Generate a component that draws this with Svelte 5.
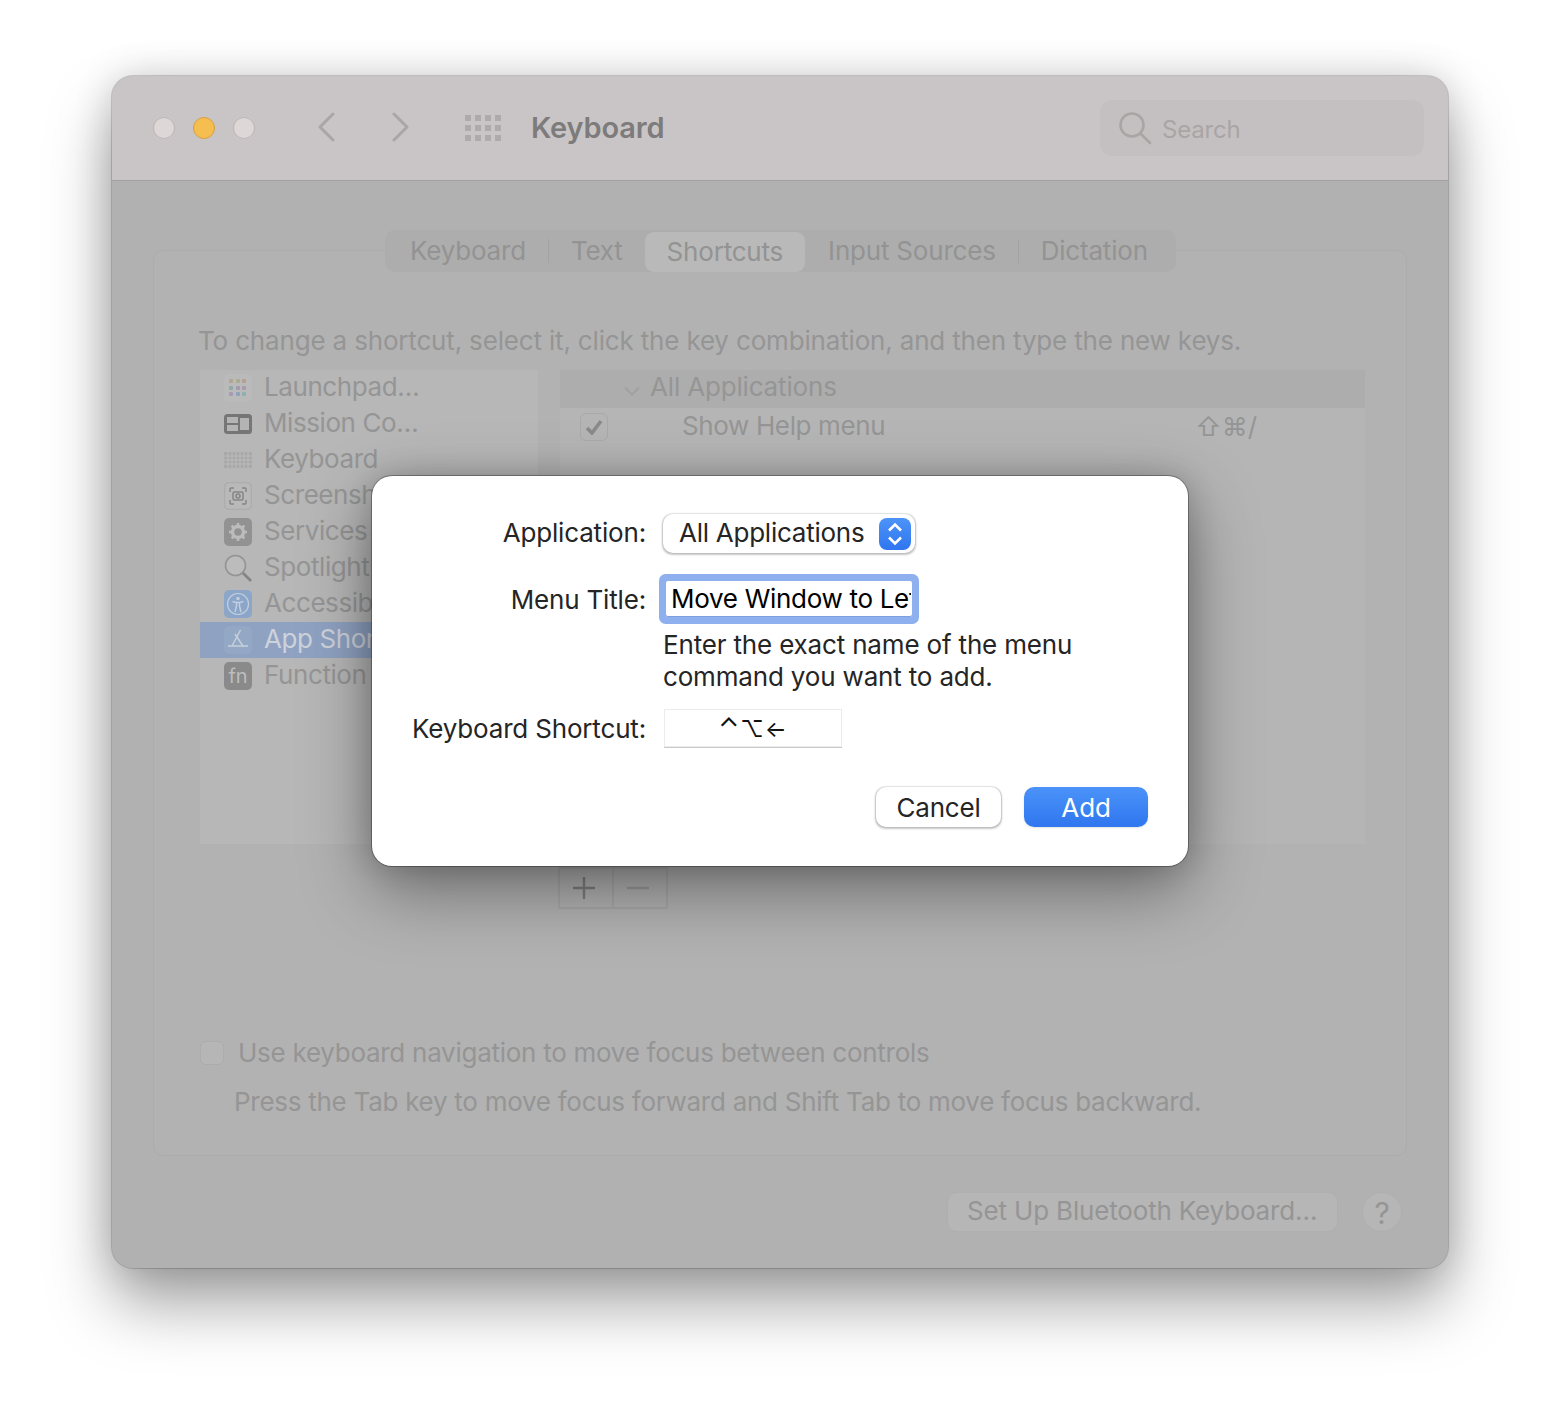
<script>
	const tabs = ['Keyboard', 'Text', 'Shortcuts', 'Input Sources', 'Dictation'];
	const activeTab = 'Shortcuts';

	const categories = [
		{ id: 'launchpad', label: 'Launchpad…' },
		{ id: 'mission', label: 'Mission Co…' },
		{ id: 'keyboard', label: 'Keyboard' },
		{ id: 'screenshot', label: 'Screenshots' },
		{ id: 'services', label: 'Services' },
		{ id: 'spotlight', label: 'Spotlight' },
		{ id: 'access', label: 'Accessibility' },
		{ id: 'app', label: 'App Shortcuts', selected: true },
		{ id: 'fn', label: 'Function Keys' }
	];

	const launchDots = ['#b3a68f', '#a9ad90', '#b3a08f', '#8fa8a8', '#a39ab0', '#a89ab0', '#a69ab5', '#8fa3b8', '#8fb0b0'];
	const gridDots = Array.from({ length: 12 });
</script>

<div class="window">
	<header class="titlebar">
		<div class="lights">
			<span class="light"></span>
			<span class="light yellow"></span>
			<span class="light"></span>
		</div>
		<div class="nav">
			<svg width="18" height="30" viewBox="0 0 18 30"><path d="M16 2 3 15l13 13" /></svg>
			<svg width="18" height="30" viewBox="0 0 18 30"><path d="M2 2l13 13L2 28" /></svg>
		</div>
		<div class="apps">
			{#each gridDots as _}
				<span></span>
			{/each}
		</div>
		<h1>Keyboard</h1>
		<div class="search">
			<svg width="34" height="34" viewBox="0 0 34 34">
				<circle cx="14" cy="14" r="11.5" />
				<path d="M22.5 22.5 32 32" />
			</svg>
			<span>Search</span>
		</div>
	</header>

	<main class="content">
		<nav class="tabs">
			{#each tabs as tab, i}
				{#if i === 1 || i === 4}<span class="sep"></span>{/if}
				<span class="tab" class:active={tab === activeTab}>{tab}</span>
			{/each}
		</nav>

		<section class="box">
			<p class="intro">To change a shortcut, select it, click the key combination, and then type the new keys.</p>

			<div class="lists">
				<ul class="categories">
					{#each categories as cat}
						<li class:selected={cat.selected}>
							<span class="icon">
								{#if cat.id === 'launchpad'}
									<span class="launch">
										{#each launchDots as color}
											<i style="background: {color}"></i>
										{/each}
									</span>
								{:else if cat.id === 'mission'}
									<svg width="28" height="20" viewBox="0 0 28 20">
										<rect width="28" height="20" rx="3.5" fill="#767676" />
										<rect x="3" y="3" width="11" height="6" fill="#b4b4b4" />
										<rect x="3" y="11" width="11" height="6" fill="#b4b4b4" />
										<rect x="16" y="4" width="9" height="12" fill="#b4b4b4" />
									</svg>
								{:else if cat.id === 'keyboard'}
									<svg width="28" height="16" viewBox="0 0 28 16">
										<rect width="28" height="16" fill="#a8a8a8" />
										<path d="M0 4h28M0 8h28M0 12h28M4 0v16M8 0v16M12 0v16M16 0v16M20 0v16M24 0v16" stroke="#bbb" stroke-width="1" />
									</svg>
								{:else if cat.id === 'screenshot'}
									<svg width="28" height="28" viewBox="0 0 28 28" fill="none" stroke="#858585" stroke-width="1.5">
										<rect x=".5" y=".5" width="27" height="27" rx="5" fill="#b9b9b9" stroke="#adadad" />
										<path d="M6 10V7q0-1 1-1h3M18 6h3q1 0 1 1v3M22 18v3q0 1-1 1h-3M10 22H7q-1 0-1-1v-3" />
										<rect x="9" y="10" width="10" height="8" rx="1.5" />
										<circle cx="14" cy="14" r="2" />
									</svg>
								{:else if cat.id === 'services'}
									<svg width="28" height="28" viewBox="0 0 28 28">
										<rect width="28" height="28" rx="5" fill="#929292" />
										<circle cx="14" cy="14" r="5.5" fill="none" stroke="#bcbcbc" stroke-width="3.4" />
										<path d="M14 5v18M5 14h18M7.6 7.6l12.8 12.8M20.4 7.6 7.6 20.4" stroke="#bcbcbc" stroke-width="2.6" stroke-dasharray="3 12" />
									</svg>
								{:else if cat.id === 'spotlight'}
									<svg width="28" height="28" viewBox="0 0 28 28" fill="none">
										<circle cx="11.5" cy="11.5" r="10" fill="#bcbcbc" stroke="#949494" stroke-width="1.6" />
										<path d="M19 19l8 8" stroke="#858585" stroke-width="2.6" />
									</svg>
								{:else if cat.id === 'access'}
									<svg width="28" height="28" viewBox="0 0 28 28" fill="none">
										<rect width="28" height="28" rx="5" fill="#8ba6c9" />
										<circle cx="14" cy="14" r="10.5" stroke="#c3cfde" stroke-width="1.2" />
										<circle cx="14" cy="8.5" r="1.7" fill="#c3cfde" />
										<path d="M8.5 11.5 12.5 12.5V16l-1.5 6M19.5 11.5l-4 1V16l1.5 6M12.5 12.5h3" stroke="#c3cfde" stroke-width="1.5" />
									</svg>
								{:else if cat.id === 'app'}
									<svg width="28" height="28" viewBox="0 0 28 28" fill="none">
										<rect width="28" height="28" rx="5" fill="#93a8c4" />
										<path d="M16.5 4 8 20M11 8l8.5 13M4 20h20" stroke="#c6cfdc" stroke-width="1.5" />
									</svg>
								{:else if cat.id === 'fn'}
									<span class="fn">fn</span>
								{/if}
							</span>
							<span class="name">{cat.label}</span>
						</li>
					{/each}
				</ul>

				<div class="commands">
					<div class="group">
						<svg width="16" height="10" viewBox="0 0 16 10"><path d="M1 1.5 8 8.5l7-7" /></svg>
						<span>All Applications</span>
					</div>
					<div class="command">
						<span class="check">
							<svg width="18" height="16" viewBox="0 0 18 16"><path d="M2 9l5 5L16 2" /></svg>
						</span>
						<span class="cmd-name">Show Help menu</span>
						<span class="keys">⇧⌘/</span>
					</div>
				</div>
			</div>

			<div class="plusminus">
				<span class="pm">
					<svg width="22" height="22" viewBox="0 0 22 22"><path d="M0 11h22M11 0v22" /></svg>
				</span>
				<span class="pm">
					<svg width="22" height="22" viewBox="0 0 22 22"><path class="faint" d="M0 11h22" /></svg>
				</span>
			</div>

			<label class="navcheck">
				<span class="box-check"></span>
				<span>Use keyboard navigation to move focus between controls</span>
			</label>
			<p class="navhint">Press the Tab key to move focus forward and Shift Tab to move focus backward.</p>
		</section>

		<footer class="bottom">
			<span class="bt-btn">Set Up Bluetooth Keyboard…</span>
			<span class="help">?</span>
		</footer>
	</main>

	<div class="sheet">
		<div class="form">
			<span class="lbl first">Application:</span>
			<div class="select">
				<span>All Applications</span>
				<span class="stepper">
					<svg width="16" height="24" viewBox="0 0 16 24"><path d="M2 8.5 8 2.5l6 6M2 15.5l6 6 6-6" /></svg>
				</span>
			</div>

			<span class="lbl second">Menu Title:</span>
			<input class="title-input" value="Move Window to Left" readonly />

			<span></span>
			<p class="hint">Enter the exact name of the menu<br />command you want to add.</p>

			<span class="lbl">Keyboard Shortcut:</span>
			<div class="shortcut"><span class="ctrl">⌃</span>⌥←</div>
		</div>
		<div class="actions">
			<button class="cancel">Cancel</button>
			<button class="add">Add</button>
		</div>
	</div>
</div>

<style>
	:global(body) {
		background: #fff;
		font-family: Inter, 'Liberation Sans', sans-serif;
	}

	.window {
		position: relative;
		width: 1336px;
		height: 1192px;
		margin: 76px 112px 148px;
		display: flex;
		flex-direction: column;
		background: #b1b1b1;
		border-radius: 21px;
		box-shadow: 0 0 0 1px rgba(0, 0, 0, 0.16), 0 36px 64px rgba(0, 0, 0, 0.36), 0 0 38px rgba(0, 0, 0, 0.16);
		font-size: 26px;
		letter-spacing: -0.17px;
		color: #959595;
	}

	/* title bar */
	.titlebar {
		height: 105px;
		flex: none;
		box-sizing: border-box;
		display: flex;
		align-items: center;
		background: #c9c5c6;
		border-bottom: 1px solid #a3a1a1;
		border-radius: 21px 21px 0 0;
		padding: 0 24px 0 41px;
	}

	.lights {
		display: flex;
		gap: 18px;
	}

	.light {
		width: 22px;
		height: 22px;
		box-sizing: border-box;
		border-radius: 50%;
		background: #ddd7d8;
		border: 1px solid #bdb7b8;
	}

	.light.yellow {
		background: #f6bd4f;
		border-color: #d8a03c;
	}

	.nav {
		display: flex;
		gap: 57px;
		margin: -2px 0 0 62px;
	}

	.nav path {
		fill: none;
		stroke: #a9a6a6;
		stroke-width: 3;
		stroke-linecap: round;
		stroke-linejoin: round;
	}

	.apps {
		display: grid;
		grid-template-columns: repeat(4, 6px);
		grid-template-rows: repeat(3, 6px);
		gap: 3.6px 4px;
		margin-left: 55px;
	}

	.apps span {
		background: #aeaaab;
	}

	h1 {
		margin: -2px 0 0 30px;
		font-size: 29px;
		font-weight: 600;
		color: #7d7b7b;
		flex: 1;
	}

	.search {
		width: 324px;
		height: 56px;
		box-sizing: border-box;
		display: flex;
		align-items: center;
		gap: 10px;
		padding-left: 18px;
		background: #c4c0c1;
		border-radius: 12px;
		color: #a8a5a5;
		font-size: 24px;
	}

	.search span {
		margin-top: 2px;
	}

	.search svg {
		fill: none;
		stroke: #a8a5a5;
		stroke-width: 2.6;
		stroke-linecap: round;
	}

	/* content */
	.content {
		flex: 1;
		display: flex;
		flex-direction: column;
		padding: 49px 41px 0;
	}

	.tabs {
		align-self: flex-start;
		position: relative;
		z-index: 1;
		display: flex;
		align-items: center;
		height: 42px;
		padding: 0 6px 0 3px;
		margin: 0 0 -22px 232px;
		background: #adadad;
		border-radius: 10px;
		letter-spacing: -0.2px;
	}

	.tab {
		padding: 0 22px;
		line-height: 40px;
		border-radius: 9px;
		color: #939393;
	}

	.tab.active {
		background: #b9b9b9;
		margin: 2px 1px 0 0;
	}

	.sep {
		width: 1px;
		height: 24px;
		background: #a3a3a3;
	}

	.box {
		height: 906px;
		box-sizing: border-box;
		padding: 74px 41px 0 46px;
		border: 1px solid #acacac;
		border-radius: 10px;
		background: #b2b2b2;
	}

	.intro {
		margin: 0 0 13px -2px;
		line-height: 32px;
		white-space: nowrap;
	}

	.lists {
		display: flex;
		gap: 22px;
		height: 474px;
	}

	.categories {
		width: 338px;
		margin: 0;
		padding: 0;
		list-style: none;
		background: #b7b7b7;
		overflow: hidden;
	}

	.categories li {
		height: 36px;
		display: flex;
		align-items: center;
		white-space: nowrap;
	}

	.categories li.selected {
		background: #8fa2c2;
		color: #cdd2db;
	}

	.name {
		margin-top: -4px;
		letter-spacing: -0.42px;
	}

	.icon {
		width: 28px;
		height: 28px;
		margin: 0 12px 0 24px;
		display: flex;
		align-items: center;
		justify-content: center;
		flex: none;
	}

	.launch {
		width: 28px;
		height: 28px;
		box-sizing: border-box;
		padding: 5px;
		display: grid;
		grid-template-columns: repeat(3, 4px);
		grid-auto-rows: 4px;
		gap: 2.5px;
		background: #bababa;
		border-radius: 5px;
	}

	.launch i {
		border-radius: 1px;
	}

	.fn {
		width: 28px;
		height: 28px;
		display: flex;
		align-items: center;
		justify-content: center;
		background: #8a8a8a;
		border-radius: 5px;
		color: #bdbdbd;
		font-size: 20px;
		font-weight: 400;
	}

	.commands {
		flex: 1;
		background: #b5b5b5;
	}

	.group {
		height: 38px;
		display: flex;
		align-items: center;
		gap: 10px;
		padding-left: 64px;
		background: #adadad;
	}

	.group span {
		margin-top: -6px;
	}

	.group svg {
		margin-top: 3px;
	}

	.group path {
		fill: none;
		stroke: #a0a0a0;
		stroke-width: 2;
	}

	.command {
		height: 36px;
		display: flex;
		align-items: center;
		padding-left: 20px;
	}

	.check {
		width: 28px;
		height: 28px;
		box-sizing: border-box;
		display: flex;
		align-items: center;
		justify-content: center;
		border: 1px solid #a9a9a9;
		border-radius: 6px;
		margin-top: 2px;
	}

	.check path {
		fill: none;
		stroke: #8a8a8a;
		stroke-width: 3.6;
	}

	.cmd-name {
		margin: -2px 0 0 74px;
		width: 513px;
		white-space: nowrap;
		letter-spacing: -0.37px;
	}

	.keys {
		font-size: 26px;
		letter-spacing: 0;
		color: #959595;
	}

	.plusminus {
		display: flex;
		width: 110px;
		height: 42px;
		box-sizing: border-box;
		margin: 23px 0 0 358px;
		border: 2px solid rgba(0, 0, 0, 0.05);
	}

	.pm {
		flex: 1;
		display: flex;
		align-items: center;
		justify-content: center;
	}

	.pm + .pm {
		border-left: 2px solid rgba(0, 0, 0, 0.05);
	}

	.pm path {
		fill: none;
		stroke: #7f7f7f;
		stroke-width: 2.4;
	}

	.pm svg {
		margin-right: 4px;
	}

	.pm path.faint {
		stroke: #999;
	}

	.navcheck {
		display: flex;
		align-items: center;
		gap: 14px;
		margin: 128px 0 0 0;
		line-height: 32px;
		letter-spacing: -0.27px;
	}

	.box-check {
		width: 24px;
		height: 24px;
		box-sizing: border-box;
		background: #b6b6b6;
		border: 1px solid #acacac;
		border-radius: 6px;
	}

	.navhint {
		margin: 17px 0 0 34px;
		line-height: 32px;
		white-space: nowrap;
		letter-spacing: -0.27px;
	}

	.bottom {
		display: flex;
		align-items: center;
		justify-content: flex-end;
		gap: 24px;
		margin: 36px 5px 0 0;
	}

	.bt-btn {
		width: 391px;
		height: 40px;
		box-sizing: border-box;
		padding-left: 19px;
		line-height: 36px;
		white-space: nowrap;
		background: #b6b6b6;
		border: 1px solid #afafaf;
		border-radius: 10px;
	}

	.help {
		width: 40px;
		height: 40px;
		box-sizing: border-box;
		text-align: center;
		line-height: 40px;
		background: #b6b6b6;
		border: 1px solid #afafaf;
		border-radius: 50%;
		font-size: 30px;
	}

	/* add shortcut sheet */
	.sheet {
		position: absolute;
		left: 260px;
		top: 400px;
		width: 816px;
		height: 390px;
		box-sizing: border-box;
		padding-top: 38px;
		background: #fff;
		border-radius: 20px;
		box-shadow: 0 0 0 1px rgba(0, 0, 0, 0.3), 0 24px 70px rgba(0, 0, 0, 0.4), 0 0 30px rgba(0, 0, 0, 0.18);
		color: #252525;
	}

	.form {
		display: grid;
		grid-template-columns: 274px 1fr;
		grid-template-rows: 40px 63px auto 38px;
		column-gap: 16px;
		align-items: center;
	}

	.lbl {
		text-align: right;
		white-space: nowrap;
	}

	.lbl.first {
		line-height: 38px;
		align-self: start;
	}

	.lbl.second {
		margin-top: 27px;
	}

	.select {
		width: 252px;
		height: 39px;
		box-sizing: border-box;
		align-self: start;
		display: flex;
		align-items: center;
		justify-content: space-between;
		padding: 0 4px 0 16px;
		margin-left: 1px;
		border-radius: 10px;
		background: #fff;
		box-shadow: 0 0 0 1px rgba(0, 0, 0, 0.05), 0 1px 2px 0.5px rgba(0, 0, 0, 0.22);
		white-space: nowrap;
		letter-spacing: -0.25px;
	}

	.select > span:first-child {
		margin-top: -2px;
	}

	.stepper {
		width: 32px;
		height: 32px;
		display: flex;
		align-items: center;
		justify-content: center;
		border-radius: 8px;
		background: linear-gradient(#4c93f8, #2f76f0);
	}

	.stepper path {
		fill: none;
		stroke: #fff;
		stroke-width: 2.6;
	}

	.title-input {
		width: 246px;
		height: 36px;
		box-sizing: border-box;
		margin: 27px 0 0 4px;
		padding: 0 1px 2px 5px;
		border: 0;
		border-radius: 2px;
		outline: none;
		box-shadow: 0 0 0 7px #8fb0ef, inset 0 -1px 0 #7f9fe0;
		background: #fff;
		color: #000;
		font: inherit;
		letter-spacing: -0.3px;
	}

	.hint {
		margin: 12px 0 16px 1px;
		line-height: 32px;
		white-space: nowrap;
	}

	.shortcut {
		width: 176px;
		height: 36px;
		box-sizing: border-box;
		margin-left: 3px;
		text-align: center;
		line-height: 36px;
		color: #111;
		font-size: 23px;
		letter-spacing: 1px;
		background: #fff;
		box-shadow: 0 0 0 1px #ececec, 0 1px 0 1px #c9c9c9;
	}

	.ctrl {
		font-size: 27px;
	}

	.actions {
		display: flex;
		justify-content: flex-end;
		align-items: center;
		gap: 23px;
		margin: 40px 40px 0 0;
	}

	button {
		height: 40px;
		padding: 0;
		border: 0;
		border-radius: 10px;
		font: inherit;
		letter-spacing: inherit;
	}

	.cancel {
		width: 125px;
		background: #fff;
		color: #252525;
		box-shadow: 0 0 0 1px rgba(0, 0, 0, 0.05), 0 1px 2px 0.5px rgba(0, 0, 0, 0.22);
	}

	.add {
		width: 124px;
		background: linear-gradient(#4b93f8, #2f76f0);
		color: #fff;
		box-shadow: 0 1px 2px rgba(0, 0, 0, 0.12);
	}
</style>
